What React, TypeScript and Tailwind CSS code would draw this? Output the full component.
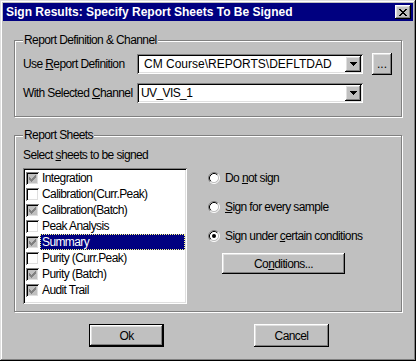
import React from "react";

const RAISED =
  "shadow-[inset_-1px_-1px_0_#000,inset_1px_1px_0_#fff,inset_-2px_-2px_0_#808080,inset_2px_2px_0_#dfdfdf]";
const SUNKEN =
  "shadow-[inset_1px_1px_0_#808080,inset_-1px_-1px_0_#fff,inset_2px_2px_0_#000,inset_-2px_-2px_0_#dfdfdf]";
const ETCHED = "border border-[#808080] shadow-[inset_1px_1px_0_#fff,1px_1px_0_#fff]";

function Pixels({ rows, color }: { rows: string[]; color: string }) {
  const w = rows[0].length;
  const h = rows.length;
  return (
    <svg width={w} height={h} viewBox={`0 0 ${w} ${h}`} shapeRendering="crispEdges">
      {rows.flatMap((row, y) =>
        row.split("").map((c, x) =>
          c === "X" ? <rect key={`${x}-${y}`} x={x} y={y} width="1" height="1" fill={color} /> : null
        )
      )}
    </svg>
  );
}

const CHECK = ["......X", ".....XX", "X...XXX", "XX.XXX.", "XXXXX..", ".XXX...", "..X...."];
const CLOSE = ["XX....XX", ".XX..XX.", "..XXXX..", "...XX...", "..XXXX..", ".XX..XX.", "XX....XX"];
const ARROW = ["XXXXXXX", ".XXXXX.", "..XXX..", "...X..."];

function Checkbox({ checked }: { checked: boolean }) {
  return (
    <div
      className={`w-[13px] h-[13px] flex items-center justify-center ${SUNKEN} ${
        checked ? "bg-[#c0c0c0]" : "bg-white"
      }`}
    >
      {checked && <Pixels rows={CHECK} color="#808080" />}
    </div>
  );
}

function Radio({ checked }: { checked: boolean }) {
  return (
    <svg width="12" height="12" viewBox="0 0 12 12">
      <circle cx="6" cy="6" r="4.5" fill="#fff" />
      <path d="M2.11 9.89 A5.5 5.5 0 0 1 9.89 2.11" fill="none" stroke="#808080" strokeWidth="1" />
      <path d="M9.89 2.11 A5.5 5.5 0 0 1 2.11 9.89" fill="none" stroke="#fff" strokeWidth="1" />
      <path d="M2.82 9.18 A4.5 4.5 0 0 1 9.18 2.82" fill="none" stroke="#000" strokeWidth="1" />
      <path d="M9.18 2.82 A4.5 4.5 0 0 1 2.82 9.18" fill="none" stroke="#c0c0c0" strokeWidth="1" />
      {checked && <circle cx="6" cy="6" r="2" fill="#000" />}
    </svg>
  );
}

function Combo({ text, textClass }: { text: string; textClass: string }) {
  return (
    <div className={`w-[226px] h-[20px] bg-white flex items-center ${SUNKEN} p-[2px]`}>
      <span className={`flex-1 whitespace-nowrap overflow-hidden ${textClass}`}>{text}</span>
      <div className={`w-[16px] h-[16px] bg-[#c0c0c0] flex items-center justify-center ${RAISED}`}>
        <Pixels rows={ARROW} color="#000" />
      </div>
    </div>
  );
}

const SHEETS: { name: string; checked: boolean }[] = [
  { name: "Integration", checked: true },
  { name: "Calibration(Curr.Peak)", checked: false },
  { name: "Calibration(Batch)", checked: true },
  { name: "Peak Analysis", checked: false },
  { name: "Summary", checked: true },
  { name: "Purity (Curr.Peak)", checked: false },
  { name: "Purity (Batch)", checked: true },
  { name: "Audit Trail", checked: true },
];

export default function App() {
  return (
    <div
      className={`w-[416px] h-[361px] bg-[#c0c0c0] p-[3px] flex flex-col font-['Liberation_Sans',Arial,sans-serif] text-[12px] leading-[14px] tracking-[-0.6px] text-black shadow-[inset_-1px_-1px_0_#000,inset_1px_1px_0_#dfdfdf,inset_-2px_-2px_0_#808080,inset_2px_2px_0_#fff]`}
    >
      {/* Title bar */}
      <div className="h-[18px] bg-[#000080] flex items-center justify-between pl-[3px] pr-[2px]">
        <span className="text-white font-bold text-[12px] tracking-normal whitespace-nowrap">
          Sign Results: Specify Report Sheets To Be Signed
        </span>
        <div className={`w-[16px] h-[14px] bg-[#c0c0c0] flex items-center justify-center ${RAISED}`}>
          <Pixels rows={CLOSE} color="#000" />
        </div>
      </div>

      <div className="px-[11px] flex flex-col">
        {/* Group 1 */}
        <div className={`mt-[19px] h-[77px] flex flex-col ${ETCHED}`}>
          <div className="-mt-[8px] ml-[8px] px-[1px] w-fit h-[14px] bg-[#c0c0c0] whitespace-nowrap">
            Report Definition &amp; Channel
          </div>
          <div className="mt-[6px] pl-[8px] h-[22px] flex items-center">
            <span className="w-[114px] whitespace-nowrap">
              Use <u>R</u>eport Definition
            </span>
            <Combo text="CM Course\REPORTS\DEFLTDAD" textClass="pl-[5px] tracking-normal" />
            <div
              className={`ml-[9px] w-[20px] h-[22px] flex items-center justify-center tracking-normal ${RAISED}`}
            >
              ...
            </div>
          </div>
          <div className="mt-[8px] pl-[8px] h-[20px] flex items-center">
            <span className="w-[114px] whitespace-nowrap">
              With Selected <u>C</u>hannel
            </span>
            <Combo text="UV_VIS_1" textClass="pl-[2px]" />
          </div>
        </div>

        {/* Group 2 */}
        <div className={`mt-[18px] h-[177px] flex flex-col ${ETCHED}`}>
          <div className="-mt-[8px] ml-[8px] px-[1px] w-fit h-[14px] bg-[#c0c0c0] whitespace-nowrap">
            Report Sheets
          </div>
          <div className="mt-[6px] pl-[8px] h-[14px] whitespace-nowrap">
            Select <u>s</u>heets to be signed
          </div>
          <div className="mt-[6px] pl-[8px] flex">
            <div className={`w-[164px] h-[136px] bg-white p-[2px] flex flex-col ${SUNKEN}`}>
              {SHEETS.map((s) => {
                const sel = s.name === "Summary";
                return (
                  <div key={s.name} className="h-[16px] flex items-center">
                    <div className="w-[15px] pl-[1px] flex items-center">
                      <Checkbox checked={s.checked} />
                    </div>
                    <div
                      className={`flex-1 h-full flex items-center pl-[1px] whitespace-nowrap border ${
                        sel
                          ? "bg-[#000080] text-white border-dotted border-[#ffff80]"
                          : "border-transparent"
                      }`}
                    >
                      {s.name}
                    </div>
                  </div>
                );
              })}
            </div>

            <div className="ml-[21px] flex flex-col">
              <div className="mt-[2px] h-[16px] flex items-center gap-[5px] whitespace-nowrap">
                <Radio checked={false} />
                <span>
                  Do <u>n</u>ot sign
                </span>
              </div>
              <div className="mt-[13px] h-[16px] flex items-center gap-[5px] whitespace-nowrap">
                <Radio checked={false} />
                <span>
                  <u>S</u>ign for every sample
                </span>
              </div>
              <div className="mt-[13px] h-[16px] flex items-center gap-[5px] whitespace-nowrap">
                <Radio checked={true} />
                <span>
                  Sign under <u>c</u>ertain conditions
                </span>
              </div>
              <div
                className={`mt-[9px] ml-[14px] w-[123px] h-[21px] flex items-center justify-center ${RAISED}`}
              >
                <span>
                  Co<u>n</u>ditions...
                </span>
              </div>
            </div>
          </div>
        </div>

        {/* Buttons */}
        <div className="mt-[12px] pl-[2px] flex justify-center gap-[90px]">
          <div className="w-[75px] h-[23px] border border-black">
            <div className={`w-full h-full flex items-center justify-center ${RAISED}`}>Ok</div>
          </div>
          <div className={`w-[75px] h-[23px] flex items-center justify-center ${RAISED}`}>Cancel</div>
        </div>
      </div>
    </div>
  );
}
